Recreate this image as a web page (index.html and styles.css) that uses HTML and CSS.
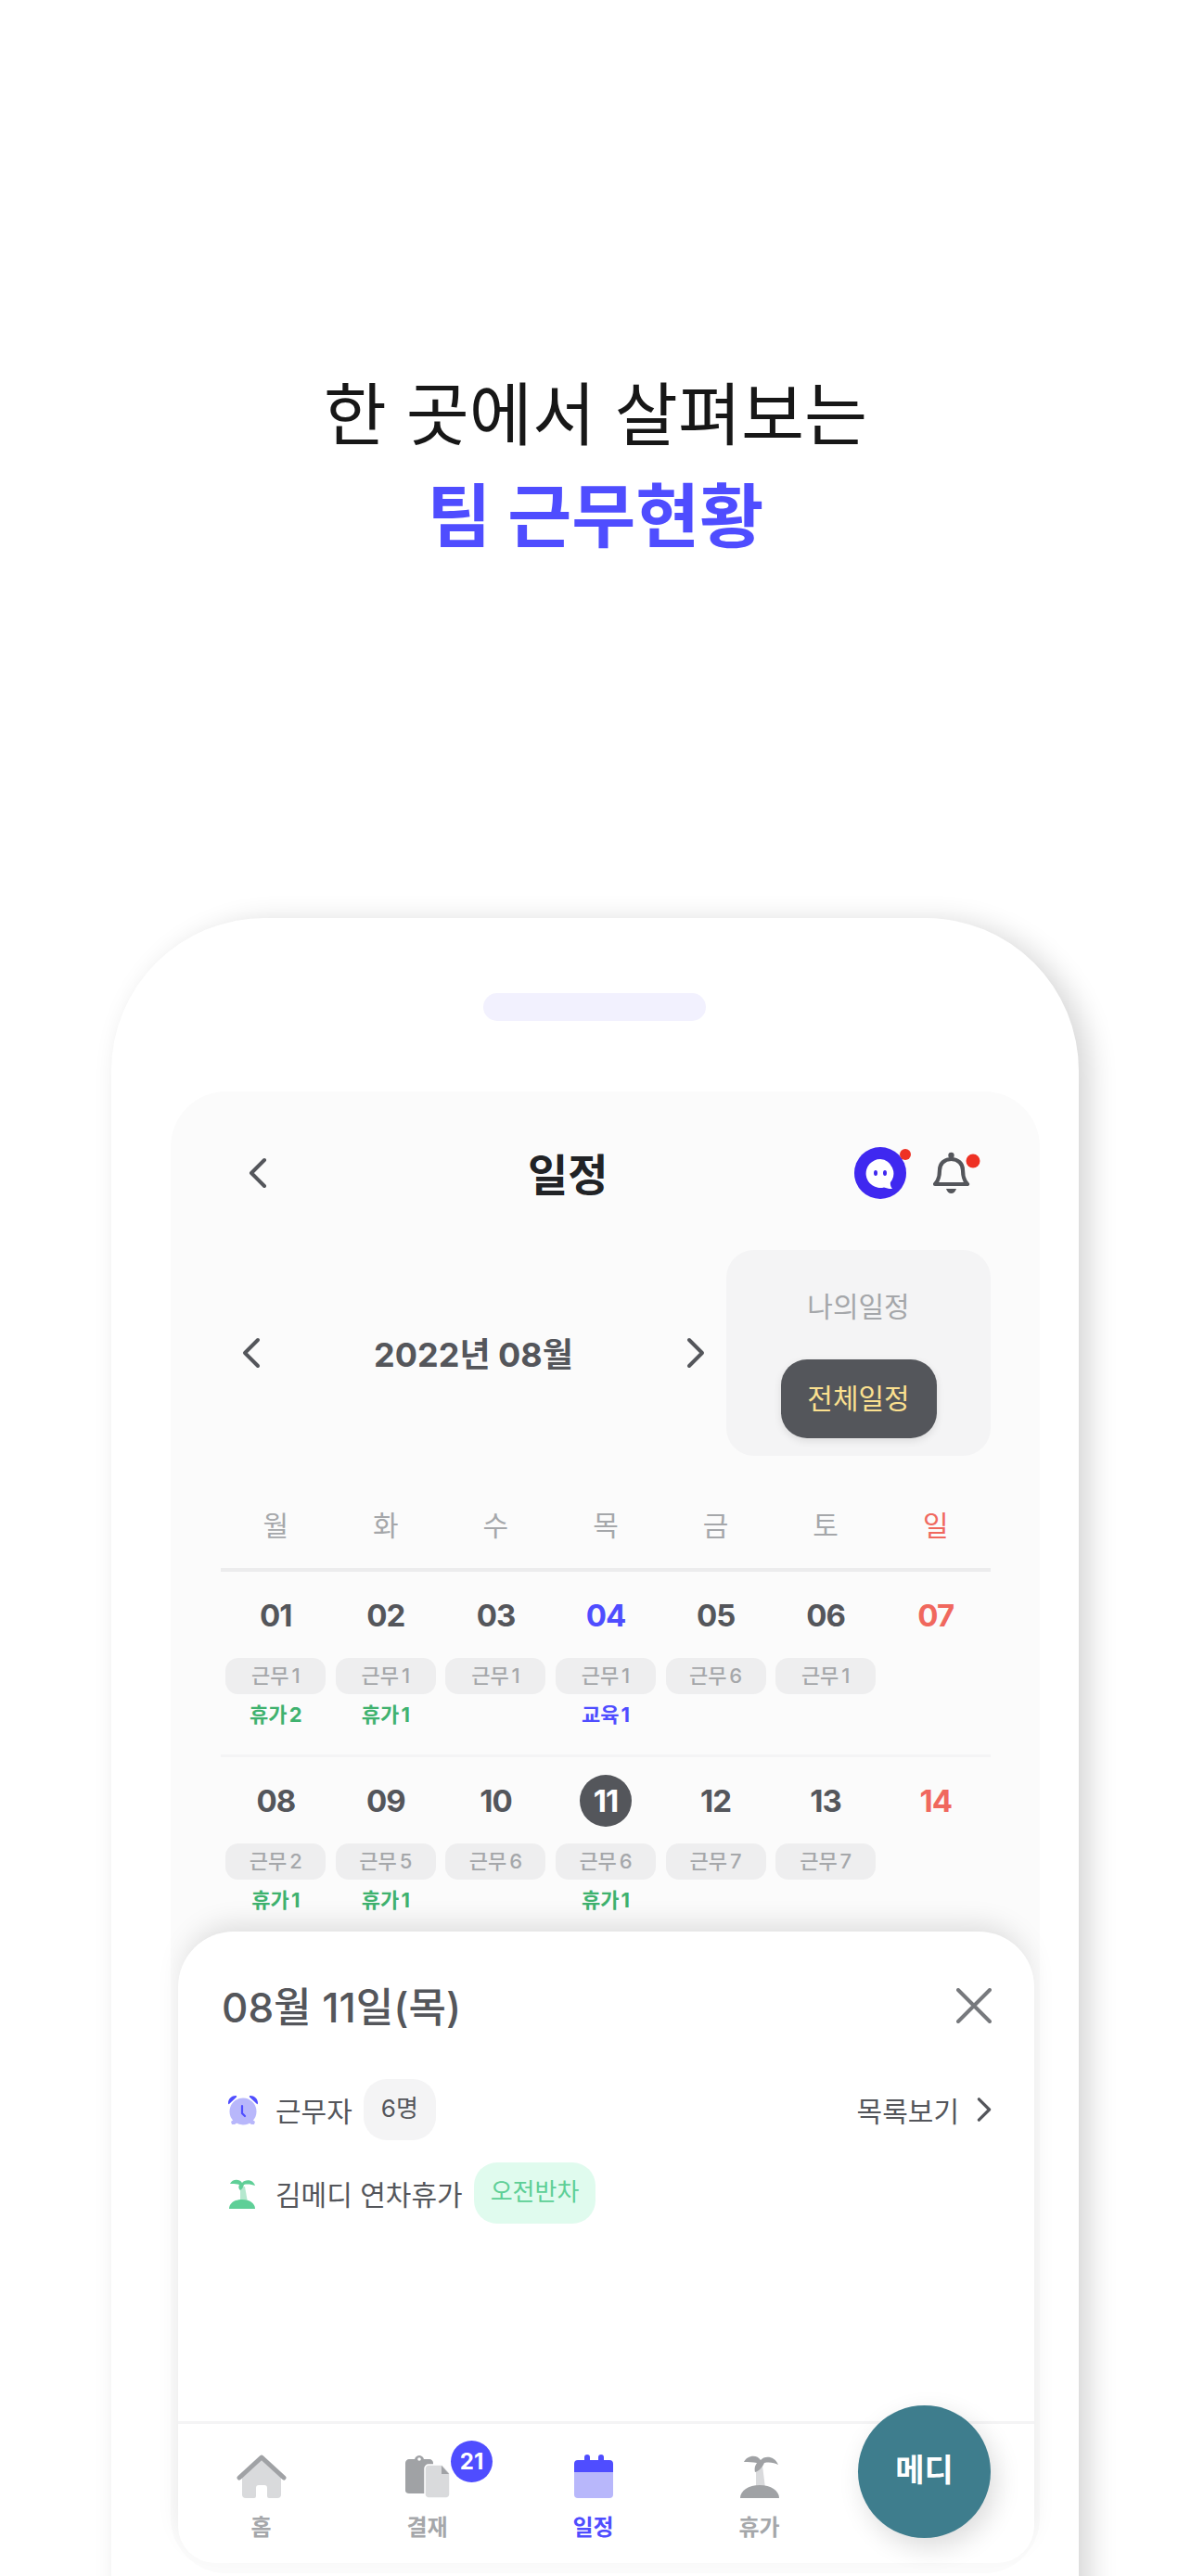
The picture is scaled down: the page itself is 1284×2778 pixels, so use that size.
FILE: index.html
```html
<!DOCTYPE html>
<html lang="ko">
<head>
<meta charset="utf-8">
<title>일정</title>
<link rel="stylesheet" href="styles.css">
</head>
<body>

<h1 class="headline">한 곳에서 살펴보는<br><strong>팀 근무현황</strong></h1>

<div class="phone">
  <div class="notch"></div>
  <div class="screen">

    <div class="top-bar">
      <svg class="chev" viewBox="0 0 20 34"><path d="M17 3 3 17l14 14"/></svg>
      <div class="page-title">일정</div>
      <div class="top-icons">
        <svg class="chat-icon" viewBox="0 0 62 56">
          <circle cx="28" cy="28" r="28" fill="#3f28f0"/>
          <path d="M28 13a15.500 15.500 0 1 0 4 30.500c3 .8 6 2 9 1.500-1.500-2-2.500-4-2-7A15.500 15.500 0 0 0 28 13z" fill="#fff"/>
          <ellipse cx="23" cy="28" rx="2" ry="3" fill="#3f28f0"/>
          <ellipse cx="33" cy="28" rx="2" ry="3" fill="#3f28f0"/>
          <circle cx="55" cy="8" r="6" fill="#ee3124"/>
        </svg>
        <svg class="bell-icon" viewBox="0 0 52 48">
          <path d="M3 36c4-4 5-8 5-15 0-7 5-12 12.500-12S33 14 33 21c0 7 1 11 5 15z" fill="none" stroke="#54565b" stroke-width="4.200" stroke-linejoin="round"/>
          <circle cx="20.500" cy="5" r="3.200" fill="#54565b"/>
          <path d="M15 41h11c-1 3-3 5-5.500 5S16 44 15 41z" fill="#54565b"/>
          <circle cx="44" cy="11" r="7.500" fill="#ee3124"/>
        </svg>
      </div>
    </div>

    <div class="cal-head">
      <svg class="chev" viewBox="0 0 20 34"><path d="M17 3 3 17l14 14"/></svg>
      <div class="month">2022년 08월</div>
      <svg class="chev" viewBox="0 0 20 34"><path d="M3 3l14 14L3 31"/></svg>
      <div class="scope">
        <div class="scope-off">나의일정</div>
        <div class="scope-on">전체일정</div>
      </div>
    </div>

    <div class="weekdays">
      <span>월</span><span>화</span><span>수</span><span>목</span><span>금</span><span>토</span><span class="sun">일</span>
    </div>

    <div class="week">
      <div class="day"><div class="num">01</div><div class="chip">근무 1</div><div class="tag green">휴가 2</div></div>
      <div class="day"><div class="num">02</div><div class="chip">근무 1</div><div class="tag green">휴가 1</div></div>
      <div class="day"><div class="num">03</div><div class="chip">근무 1</div></div>
      <div class="day"><div class="num blue">04</div><div class="chip">근무 1</div><div class="tag blue">교육 1</div></div>
      <div class="day"><div class="num">05</div><div class="chip">근무 6</div></div>
      <div class="day"><div class="num">06</div><div class="chip">근무 1</div></div>
      <div class="day"><div class="num sun">07</div></div>
    </div>
    <div class="week second">
      <div class="day"><div class="num">08</div><div class="chip">근무 2</div><div class="tag green">휴가 1</div></div>
      <div class="day"><div class="num">09</div><div class="chip">근무 5</div><div class="tag green">휴가 1</div></div>
      <div class="day"><div class="num">10</div><div class="chip">근무 6</div></div>
      <div class="day"><div class="num today">11</div><div class="chip">근무 6</div><div class="tag green">휴가 1</div></div>
      <div class="day"><div class="num">12</div><div class="chip">근무 7</div></div>
      <div class="day"><div class="num">13</div><div class="chip">근무 7</div></div>
      <div class="day"><div class="num sun">14</div></div>
    </div>

    <div class="sheet">
      <div class="sheet-head">
        <div class="sheet-date">08월 11일(목)</div>
        <svg class="close" viewBox="0 0 38 38"><path d="M2 2l34 34M36 2 2 36"/></svg>
      </div>

      <div class="info-row first">
        <svg class="info-icon" viewBox="0 0 34 33">
          <circle cx="17" cy="18" r="14.500" fill="#b8b7fb"/>
          <path d="M4 29l4-3 3 4-3 2H5zM30 29l-4-3-3 4 3 2h3z" fill="#b8b7fb"/>
          <path d="M1 9C1 4 5 1 9 1c1 0 1.500 1 1 1.500L2 10c-.5.5-1 0-1-1zM33 9c0-5-4-8-8-8-1 0-1.500 1-1 1.500l8 7.500c.5.500 1 0 1-1z" fill="#4f4dff"/>
          <path d="M16 12v8l3 3" fill="none" stroke="#4f4dff" stroke-width="2.200" stroke-linecap="round"/>
        </svg>
        <span class="info-text">근무자</span>
        <span class="pill gray">6명</span>
        <span class="list-link">목록보기</span>
        <svg class="chev small" viewBox="0 0 20 34"><path d="M3 3l14 14L3 31"/></svg>
      </div>

      <div class="info-row second">
        <svg class="info-icon" viewBox="0 0 34 33">
          <path d="M14 9h5l3 17h-8z" fill="#b5e8cf"/>
          <path d="M2 33c0-6 6-10 14-10s14 4 14 10z" fill="#5fcf97"/>
          <path d="M3 6c2-5 10-6 13-1 3-4 12-4 14 3-3-1-8-2-12-1-1 3-2 5-4 6-2-2-2-4-1-6-3-1-6-1-10-1z" fill="#5fcf97"/>
        </svg>
        <span class="info-text">김메디 연차휴가</span>
        <span class="pill mint">오전반차</span>
      </div>

      <div class="tabs">
        <div class="tab">
          <svg class="tab-icon" viewBox="0 0 54 48">
            <path d="M6 22 27 5l21 17v21a4 4 0 0 1-4 4h-9a2 2 0 0 1-2-2V36a3 3 0 0 0-3-3h-6a3 3 0 0 0-3 3v9a2 2 0 0 1-2 2h-9a4 4 0 0 1-4-4z" fill="#d9dadc"/>
            <path d="M3 25 27 3l24 22" fill="none" stroke="#a0a2a5" stroke-width="5" stroke-linecap="round" stroke-linejoin="round"/>
          </svg>
          <div class="tab-label">홈</div>
        </div>
        <div class="tab">
          <svg class="tab-icon" viewBox="0 0 48 48">
            <path d="M4 5h6c1-3 3-4 5-4s4 1 5 4h6c2 0 4 2 4 4v30c0 2-2 3-4 3H4c-2 0-4-1-4-3V9c0-2 2-4 4-4z" fill="#a0a2a5"/>
            <circle cx="15" cy="5" r="1.800" fill="#fff"/>
            <path d="M25 11h15l8 9v23c0 2-2 4-4 4H25c-2 0-4-2-4-4V15c0-2 2-4 4-4z" fill="#d9dadc" stroke="#fff" stroke-width="1.500"/>
            <path d="M39 12l8 9h-8z" fill="#a0a2a5"/>
          </svg>
          <span class="count">21</span>
          <div class="tab-label">결재</div>
        </div>
        <div class="tab active">
          <svg class="tab-icon" viewBox="0 0 42 48">
            <path d="M0 18h42v25a4 4 0 0 1-4 4H4a4 4 0 0 1-4-4z" fill="#b8b7fb"/>
            <path d="M4 6h7V3a2.500 2.500 0 0 1 6 0v3h9V3a2.500 2.500 0 0 1 6 0v3h6a4 4 0 0 1 4 4v9H0v-9a4 4 0 0 1 4-4z" fill="#4f4dff"/>
          </svg>
          <div class="tab-label">일정</div>
        </div>
        <div class="tab">
          <svg class="tab-icon" viewBox="0 0 42 48">
            <path d="M17 12h7l3 24H17z" fill="#d9dadc"/>
            <path d="M0 47c0-8 9-14 21-14s21 6 21 14z" fill="#a0a2a5"/>
            <path d="M4 8c3-7 14-9 18-2 4-5 15-5 19 5-4-2-9-3-15-2-2 5-6 9-10 10-1-4 0-7 2-10-5-1-9-1-14-1z" fill="#a0a2a5"/>
          </svg>
          <div class="tab-label">휴가</div>
        </div>
      </div>

      <div class="fab">메디</div>
    </div>
  </div>
</div>

</body>
</html>
```

FILE: styles.css
```css
html, body {
  margin: 0;
  height: 2778px;
  overflow: hidden;
  background: #fff;
}
body {
  font-family: Inter, "Noto Sans CJK KR", sans-serif;
  color: #54565b;
}

.headline {
  margin: 0;
  padding-top: 392px;
  height: 990px;
  box-sizing: border-box;
  text-align: center;
  font-size: 74px;
  line-height: 110px;
  font-weight: 400;
  color: #171717;
}
.headline strong {
  color: #4f4dff;
  font-size: 75px;
  font-weight: 700;
}

.phone {
  margin-left: 120px;
  width: 1043px;
  height: 1900px;
  background: #fff;
  border-radius: 165px 165px 0 0;
  box-shadow: 12px 4px 30px rgba(0, 0, 0, .16);
  overflow: hidden;
}
.notch {
  width: 240px;
  height: 30px;
  margin: 81px 0 0 401px;
  background: #f2f1fe;
  border-radius: 15px;
}
.screen {
  position: relative;
  margin: 76px 42px 0 64px;
  height: 1598px;
  background: #fbfbfb;
  border-radius: 60px;
}

.chev {
  width: 20px;
  height: 34px;
  flex: none;
  fill: none;
  stroke: #54565b;
  stroke-width: 4;
  stroke-linecap: round;
  stroke-linejoin: round;
}

.top-bar {
  display: flex;
  align-items: center;
  height: 60px;
  padding: 58px 64px 0 84px;
}
.page-title {
  margin-left: 281px;
  padding-bottom: 3px;
  font-size: 47px;
  font-weight: 700;
  color: #212326;
}
.top-icons {
  margin-left: auto;
  display: flex;
  align-items: center;
  gap: 22px;
}
.chat-icon {
  width: 62px;
  height: 56px;
}
.bell-icon {
  width: 52px;
  height: 48px;
}

.cal-head {
  display: flex;
  align-items: center;
  margin: 53px 53px 0 77px;
}
.month {
  flex: 1;
  padding-bottom: 2px;
  text-align: center;
  font-size: 36px;
  font-weight: 700;
}
.scope {
  margin-left: 23px;
  width: 285px;
  height: 222px;
  box-sizing: border-box;
  padding-top: 41px;
  background: #f4f4f5;
  border-radius: 30px;
  display: flex;
  flex-direction: column;
  align-items: center;
  font-size: 30px;
}
.scope-off {
  line-height: 40px;
  color: #a5a7aa;
}
.scope-on {
  margin-top: 37px;
  width: 168px;
  height: 85px;
  line-height: 85px;
  text-align: center;
  background: #54565b;
  border-radius: 28px;
  color: #fbe08f;
  box-shadow: 0 3px 8px rgba(0, 0, 0, .1);
}

.weekdays {
  display: grid;
  grid-template-columns: repeat(7, 1fr);
  margin: 55px 53px 0 54px;
  padding-bottom: 26px;
  border-bottom: 4px solid #ececed;
  text-align: center;
  font-size: 30px;
  line-height: 40px;
  color: #a5a7aa;
}
.weekdays .sun {
  color: #f0685e;
}

.week {
  display: grid;
  grid-template-columns: repeat(7, 1fr);
  margin: 0 53px 0 54px;
  height: 197px;
  border-bottom: 3px solid #f4f4f5;
}
.week.second {
  border-bottom: 0;
}
.day {
  display: flex;
  flex-direction: column;
  align-items: center;
  padding-top: 19px;
}
.num {
  width: 56px;
  height: 56px;
  line-height: 56px;
  text-align: center;
  font-size: 33px;
  font-weight: 700;
  letter-spacing: -1px;
}
.num.blue {
  color: #4f4dff;
}
.num.sun {
  color: #f0685e;
}
.num.today {
  background: #54565b;
  border-radius: 50%;
  color: #fff;
}
.chip {
  margin-top: 18px;
  width: 108px;
  height: 39px;
  line-height: 38px;
  text-align: center;
  background: #eeeeef;
  border-radius: 14px;
  font-size: 22px;
  font-weight: 500;
  color: #a5a7aa;
  word-spacing: -3px;
}
.tag {
  margin-top: 9px;
  line-height: 26px;
  font-size: 22px;
  font-weight: 700;
  word-spacing: -3px;
}
.tag.green {
  color: #3fb26f;
}
.tag.blue {
  color: #4f4dff;
}

/* bottom sheet sits over the calendar */
.sheet {
  position: absolute;
  left: 8px;
  right: 6px;
  top: 906px;
  height: 681px;
  background: #fff;
  border-radius: 60px 60px 40px 40px;
  box-shadow: 0 -14px 30px -8px rgba(0, 0, 0, .13);
  display: flex;
  flex-direction: column;
}
.sheet-head {
  display: flex;
  align-items: center;
  justify-content: space-between;
  height: 60px;
  padding: 50px 46px 0 47px;
}
.sheet-date {
  padding-bottom: 2px;
  font-size: 44px;
  font-weight: 500;
}
.close {
  width: 38px;
  height: 38px;
  fill: none;
  stroke: #77797d;
  stroke-width: 4;
  stroke-linecap: round;
}

.info-row {
  display: flex;
  align-items: center;
  padding: 0 46px 0 53px;
  height: 66px;
  font-size: 30px;
}
.info-row.first {
  margin-top: 49px;
}
.info-row.second {
  margin-top: 24px;
}
.info-icon {
  width: 34px;
  height: 33px;
  flex: none;
  margin-right: 18px;
}
.pill {
  margin-left: 12px;
  height: 66px;
  line-height: 64px;
  padding: 0 18px;
  border-radius: 25px;
  font-size: 26px;
}
.pill.gray {
  padding: 0 19px;
  background: #f4f4f5;
}
.pill.mint {
  background: #e0fbee;
  color: #5dcf96;
}
.list-link {
  margin-left: auto;
  margin-right: 19px;
}
.chev.small {
  width: 16px;
  height: 30px;
}

.tabs {
  margin-top: auto;
  height: 150px;
  border-top: 3px solid #f4f4f5;
  display: flex;
}
.tab {
  position: relative;
  width: 179px;
  display: flex;
  flex-direction: column;
  align-items: center;
  padding-top: 33px;
  box-sizing: border-box;
}
.tab-icon {
  height: 48px;
  width: 54px;
}
.tab-label {
  margin-top: 16px;
  line-height: 30px;
  font-size: 24px;
  font-weight: 700;
  color: #a5a7aa;
}
.tab.active .tab-label {
  color: #4f4dff;
}
.count {
  position: absolute;
  left: 115px;
  top: 18px;
  width: 45px;
  height: 45px;
  line-height: 45px;
  text-align: center;
  background: #4f4dff;
  border-radius: 50%;
  color: #fff;
  font-size: 24px;
  font-weight: 700;
}
.fab {
  position: absolute;
  right: 47px;
  top: 511px;
  width: 143px;
  height: 143px;
  line-height: 140px;
  text-align: center;
  background: #3e7d8d;
  border-radius: 50%;
  color: #fff;
  font-size: 34px;
  font-weight: 700;
  box-shadow: 6px 10px 28px rgba(0, 0, 0, .14);
}
```
